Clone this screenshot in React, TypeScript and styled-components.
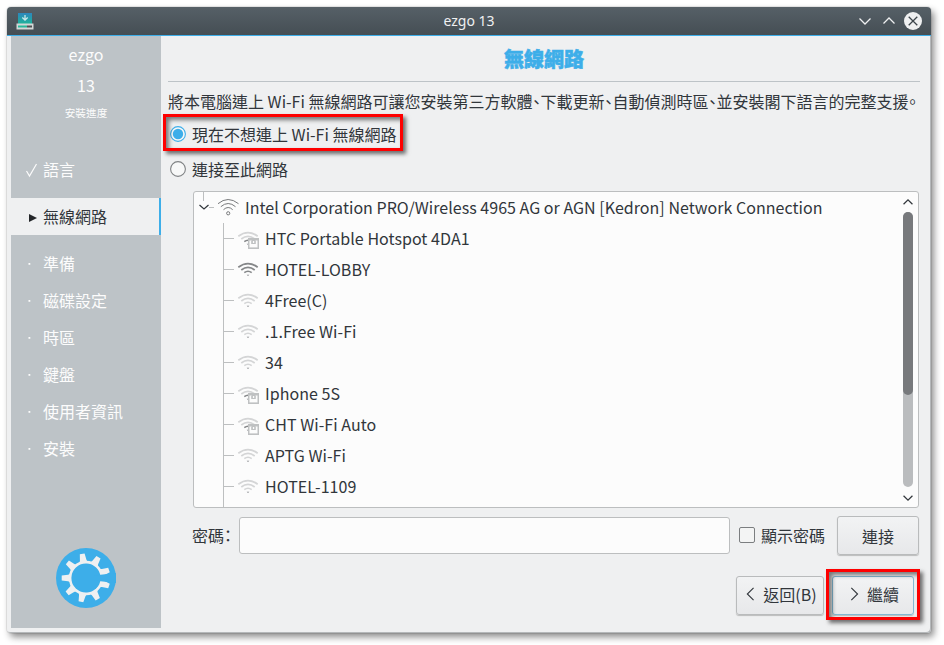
import React from "react";
import styled, { createGlobalStyle } from "styled-components";

const blue = "#3daee9";

const GlobalStyle = createGlobalStyle`
  * { box-sizing: border-box; }
  body {
    margin: 0;
    background: #fff;
    overflow: hidden;
    font-family: "Noto Sans CJK TC", "Noto Sans", sans-serif;
    font-size: 16px;
    color: #31363b;
  }
  button, input { font: inherit; color: inherit; }
`;

const Desktop = styled.div`
  height: 645px;
  padding: 7px 13px 12px 7px;
`;

const Window = styled.div`
  position: relative;
  height: 626px;
  display: flex;
  flex-direction: column;
  border-radius: 4px;
  background: #eff0f1;
  box-shadow: 0 0 0 1px rgba(0, 0, 0, 0.07), inset -1px -1px 0 #b5b8ba, 3px 4px 7px rgba(0, 0, 0, 0.45);
`;

const TitleBar = styled.header`
  display: grid;
  grid-template-columns: 80px 1fr 80px;
  align-items: center;
  height: 29px;
  flex: none;
  padding: 0 9px;
  border-bottom: 1px solid ${blue};
  border-radius: 4px 4px 0 0;
  background: linear-gradient(#566067, #454e54);
`;

const WindowTitle = styled.div`
  font-family: "Noto Sans", sans-serif;
  font-size: 14px;
  line-height: 27px;
  height: 28px;
  text-align: center;
  color: #eff0f1;
`;

const WindowButtons = styled.div`
  display: flex;
  justify-content: flex-end;
  align-items: center;
  gap: 6px;
  svg { display: block; }
`;

const Content = styled.div`
  display: flex;
  flex: 1;
  min-height: 0;
  padding: 0 11px 5px 4px;
`;

const Sidebar = styled.aside`
  width: 150px;
  flex: none;
  display: flex;
  flex-direction: column;
  padding-top: 3px;
  background: #bdc3c7;
  color: #fcfcfc;
`;

const SideHead = styled.div`
  height: 31px;
  line-height: 31px;
  text-align: center;
`;

const SideCaption = styled.div`
  height: 22px;
  line-height: 24px;
  font-size: 10.67px;
  text-align: center;
`;

const Steps = styled.nav`
  padding-top: 28px;
`;

const Step = styled.div<{ $active?: boolean }>`
  display: flex;
  height: 37px;
  line-height: 37px;
  margin: ${(p) => (p.$active ? "10px 0" : "0")};
  background: ${(p) => (p.$active ? "#eff0f1" : "transparent")};
  color: ${(p) => (p.$active ? "#31363b" : "#fcfcfc")};
  border-right: ${(p) => (p.$active ? `2px solid ${blue}` : "0")};
`;

const Marker = styled.span`
  display: flex;
  align-items: center;
  width: 32px;
  padding-left: 14px;
`;

const Emblem = styled.div`
  margin: auto auto 20px;
  height: 60px;
  svg { display: block; }
`;

const Page = styled.main`
  flex: 1;
  min-width: 0;
  display: flex;
  flex-direction: column;
  padding-left: 7px;
`;

const Heading = styled.h1`
  margin: 0;
  height: 46px;
  flex: none;
  border-bottom: 1px solid #bdc3c7;
  line-height: 46px;
  font-size: 20px;
  font-weight: 900;
  text-align: center;
  color: ${blue};
  -webkit-text-stroke: 0.5px ${blue};
`;

const Intro = styled.p`
  margin: 6px 0 0;
  height: 27px;
  line-height: 27px;
  white-space: nowrap;
`;

const Half = styled.span`
  font-feature-settings: "halt";
`;

const Radio = styled.label<{ $top: number }>`
  display: flex;
  align-items: center;
  gap: 6px;
  height: 24px;
  margin-top: ${(p) => p.$top}px;
  padding-left: 2px;
  line-height: 24px;
  svg { display: block; flex: none; }
`;

const Tree = styled.div`
  display: flex;
  height: 317px;
  flex: none;
  margin: 10px 0 0 25px;
  width: 726px;
  border: 1px solid #bcbebf;
  border-radius: 3px;
  background: #fcfcfc;
  overflow: hidden;
`;

const Rows = styled.div`
  flex: 1;
  height: 315px;
`;

const AdapterRow = styled.div`
  display: flex;
  height: 31px;
  line-height: 31px;
  white-space: nowrap;
  letter-spacing: 0.03px;
  svg { display: block; flex: none; margin-right: -1px; }
`;

const Networks = styled.div`
  height: 284px;
  margin-left: 29px;
  border-left: 1px solid #bdbfc0;
`;

const Network = styled.div`
  display: flex;
  height: 31px;
  line-height: 31px;
  letter-spacing: 0.05px;
  &::before {
    content: "";
    width: 10px;
    height: 1px;
    margin-top: 15px;
    background: #bdbfc0;
  }
  svg { display: block; flex: none; margin-right: 5px; }
`;

const ScrollBar = styled.div`
  width: 21px;
  display: flex;
  flex-direction: column;
  align-items: center;
  padding-top: 5px;
  svg { display: block; }
`;

const Track = styled.div`
  width: 10px;
  height: 275px;
  margin: 5px 0 6px;
  border-radius: 5px;
  background: #babcbe;
`;

const Thumb = styled.div`
  height: 183px;
  border-radius: 5px;
  background: #77797c;
`;

const PasswordRow = styled.div`
  display: flex;
  align-items: center;
  height: 40px;
  margin: 8px 0 0 24px;
  flex: none;
`;

const PasswordInput = styled.input`
  width: 491px;
  height: 37px;
  margin: 0 9px 2px 0;
  border: 1px solid #bcbebf;
  border-radius: 3px;
  background: #fcfcfc;
`;

const PasswordLabel = styled.label`
  width: 47px;
  padding-bottom: 2px;
  white-space: nowrap;
`;

const ShowPassword = styled.label`
  display: flex;
  align-items: center;
  width: 98px;
  gap: 6px;
  padding-bottom: 2px;
  white-space: nowrap;
`;

const CheckBox = styled.span`
  width: 16px;
  height: 16px;
  border: 1px solid #7b7e80;
  border-radius: 2px;
  background: #f3f4f4;
  margin-bottom: 1px;
`;

const Button = styled.button<{ $width: number; $focused?: boolean }>`
  display: flex;
  align-items: center;
  justify-content: center;
  gap: 5px;
  width: ${(p) => p.$width}px;
  height: 39px;
  padding: 0;
  border: 1px solid ${(p) => (p.$focused ? "#83b8d2" : "#b9bbbc")};
  border-radius: 3px;
  background: linear-gradient(#f2f3f4, #e7e8ea);
  box-shadow: 0 1px 1px rgba(0, 0, 0, 0.22);
  white-space: nowrap;
  svg { display: block; flex: none; }
`;

const ConnectButton = styled(Button)`
  align-self: flex-start;
`;

const NavButton = styled(Button)`
  padding: 0 1px 3px 0;
`;

const Footer = styled.footer`
  display: flex;
  justify-content: flex-end;
  gap: 8px;
  margin-top: 20px;
  padding-right: 6px;
`;

const Highlight = styled.div<{ $x: number; $y: number; $w: number; $h: number }>`
  position: absolute;
  left: ${(p) => p.$x}px;
  top: ${(p) => p.$y}px;
  width: ${(p) => p.$w}px;
  height: ${(p) => p.$h}px;
  border: 3px solid #fe0000;
  box-shadow: 3px 3px 4px rgba(0, 0, 0, 0.55), inset 3px 3px 4px rgba(0, 0, 0, 0.5);
  pointer-events: none;
`;

const Chevron = ({ d, w = 18, color = "#31363b", weight = 1.25 }: { d: string; w?: number; color?: string; weight?: number }) => (
  <svg width={w} height={w} viewBox="0 0 18 18" fill="none" stroke={color} strokeWidth={weight}>
    <path d={d} />
  </svg>
);

const RadioMark = ({ checked }: { checked?: boolean }) => (
  <svg width="16" height="16" viewBox="0 0 16 16">
    <circle cx="8" cy="8" r="7.4" fill="#f7f8f8" stroke={checked ? blue : "#7f8284"} strokeWidth="1.1" />
    {checked && <circle cx="8" cy="8" r="5.2" fill={blue} />}
  </svg>
);

const AdapterIcon = () => (
  <svg width="52" height="31" viewBox="0 0 52 31" fill="none">
    <path d="M9.500 0V9M15 15.500H20" stroke="#bdbfc0" />
    <path d="M5.500 13L10 17L14.500 13" stroke="#31363b" strokeWidth="1.2" />
    <g stroke="#77797b" strokeWidth="1">
      <path d="M24 11.700Q34 3.300 44.500 11.700M26.800 14.700Q34.200 8.300 41.500 14.700M29.500 17.700Q34.200 13.300 38.700 17.700" />
      <circle cx="34.200" cy="21.300" r="1.600" />
    </g>
  </svg>
);

const SignalIcon = ({ strong, locked }: { strong?: boolean; locked?: boolean }) => (
  <svg width="26" height="31" viewBox="0 0 26 31" fill="none">
    <g stroke={strong ? "#858789" : "#d4d5d6"} strokeWidth="1.700">
      <path d="M4.300 13.200Q14 5.900 23.700 13.200" />
      <path d="M7.300 16Q14 10.800 20.700 16" />
      <path d="M10.300 18.700Q14 15.800 17.700 18.700" stroke={locked ? "#858789" : undefined} />
    </g>
    <path d="M12.700 20.700H15.300L14 22Z" fill="#85878a" />
    {locked && (
      <g>
        <path d="M14 15H25V26H14Z" fill="#bfc1c2" />
        <path d="M15 17.500H24V25H15Z" fill="#fcfcfc" />
        <path d="M15 16H24V24.900H15Z" stroke="#bfc1c2" strokeWidth="1" />
        <path d="M17.200 21V18.500Q17.200 16 19.500 16T21.800 18.500V21Z" fill="#bfc1c2" />
        <path d="M18.900 18H20.200V20H18.900Z" fill="#fcfcfc" />
      </g>
    )}
  </svg>
);

const gearAngles = [-99, -59, -19, 19, 61, 102, 141, 180, 220];

const Gear = () => (
  <svg width="60" height="60" viewBox="0 0 60 60">
    <circle cx="30" cy="30" r="30" fill={blue} />
    <circle cx="30" cy="30" r="15.700" fill="none" stroke="#eff0f1" strokeWidth="3" />
    {gearAngles.map((a) => (
      <path key={a} d="M14 -4.700L18 -3.300L24.300 -2.400V2.400L18 3.300L14 4.700Z" fill="#eff0f1" transform={`translate(30 30) rotate(${a})`} />
    ))}
    <circle cx="30" cy="30" r="14.600" fill={blue} />
    <path d="M38 27.500L60 25V35L38 32.500Z" fill={blue} />
  </svg>
);

const AppIcon = () => (
  <svg width="18" height="18" viewBox="0 0 18 18">
    <defs>
      <linearGradient id="installer" x2="0" y2="1">
        <stop stopColor="#2d87bd" />
        <stop offset="1" stopColor="#1eb39a" />
      </linearGradient>
    </defs>
    <path d="M2 1H16V12H2Z" fill="url(#installer)" />
    <path d="M9 3V8M6.300 5.500L9 8L11.700 5.500" fill="none" stroke="#c9e6e9" strokeWidth="1.300" />
    <path d="M.5 11.500H17.500V17.500H.5Z" fill="#d3d7d7" />
    <path d="M2 14.500H11" stroke="#26b99a" strokeWidth="2" />
    <path d="M11 14.500H16" stroke="#4d5052" strokeWidth="2" />
  </svg>
);

const networks = [
  { name: "HTC Portable Hotspot 4DA1", locked: true },
  { name: "HOTEL-LOBBY", strong: true },
  { name: "4Free(C)" },
  { name: ".1.Free Wi-Fi" },
  { name: "34" },
  { name: "Iphone 5S", locked: true },
  { name: "CHT Wi-Fi Auto", locked: true },
  { name: "APTG Wi-Fi" },
  { name: "HOTEL-1109" },
];

const steps = ["語言", "無線網路", "準備", "磁碟設定", "時區", "鍵盤", "使用者資訊", "安裝"];

const StepMark = ({ index }: { index: number }) => (
  <svg width="14" height="16" viewBox="0 0 14 16">
    {index === 0 && <path d="M1.500 9L4.500 14L11.500 2" fill="none" stroke="#fcfcfc" strokeWidth="1.200" />}
    {index === 1 && <path d="M4 5L12 9L4 13Z" fill="#232629" />}
    {index > 1 && <path d="M3.500 7H5.300V8.800H3.500Z" fill="#fcfcfc" />}
  </svg>
);

export default function App() {
  return (
    <Desktop lang="zh-Hant">
      <GlobalStyle />
      <Window>
        <TitleBar>
          <AppIcon />
          <WindowTitle>ezgo 13</WindowTitle>
          <WindowButtons>
            <Chevron color="#eff0f1" d="M3.500 6.500L9 12L14.500 6.500" />
            <Chevron color="#eff0f1" d="M3.500 11.500L9 6L14.500 11.500" />
            <svg width="18" height="18" viewBox="0 0 18 18">
              <circle cx="9" cy="9" r="9" fill="#eff0f1" />
              <path d="M4.700 4.700L13.300 13.300M13.300 4.700L4.700 13.300" stroke="#3d454b" strokeWidth="1.300" />
            </svg>
          </WindowButtons>
        </TitleBar>
        <Content>
          <Sidebar>
            <SideHead>ezgo</SideHead>
            <SideHead>13</SideHead>
            <SideCaption>安裝進度</SideCaption>
            <Steps>
              {steps.map((step, i) => (
                <Step key={step} $active={i === 1}>
                  <Marker><StepMark index={i} /></Marker>
                  {step}
                </Step>
              ))}
            </Steps>
            <Emblem><Gear /></Emblem>
          </Sidebar>
          <Page>
            <Heading>無線網路</Heading>
            <Intro>
              將本電腦連上 Wi-Fi 無線網路可讓您安裝第三方軟體<Half>、</Half>下載更新<Half>、</Half>自動偵測時區<Half>、</Half>並安裝閣下語言的完整支援<Half>。</Half>
            </Intro>
            <Radio $top={7}><RadioMark checked />現在不想連上 Wi-Fi 無線網路</Radio>
            <Radio $top={11}><RadioMark />連接至此網路</Radio>
            <Tree>
              <Rows>
                <AdapterRow><AdapterIcon />Intel Corporation PRO/Wireless 4965 AG or AGN [Kedron] Network Connection</AdapterRow>
                <Networks>
                  {networks.map((n) => (
                    <Network key={n.name}><SignalIcon strong={n.strong} locked={n.locked} />{n.name}</Network>
                  ))}
                </Networks>
              </Rows>
              <ScrollBar>
                <Chevron w={10} weight={2.2} d="M1 13L9 5L17 13" />
                <Track><Thumb /></Track>
                <Chevron w={10} weight={2.2} d="M1 5L9 13L17 5" />
              </ScrollBar>
            </Tree>
            <PasswordRow>
              <PasswordLabel>密碼<Half>：</Half></PasswordLabel>
              <PasswordInput type="password" />
              <ShowPassword><CheckBox />顯示密碼</ShowPassword>
              <ConnectButton $width={82}>連接</ConnectButton>
            </PasswordRow>
            <Footer>
              <NavButton $width={88}><Chevron w={16} d="M13 2L6 9L13 16" />返回(B)</NavButton>
              <NavButton $width={82} $focused><Chevron w={16} d="M6 2L13 9L6 16" />繼續</NavButton>
            </Footer>
          </Page>
        </Content>
        <Highlight $x={156} $y={107} $w={240} $h={37} />
        <Highlight $x={819} $y={562} $w={94} $h={51} />
      </Window>
    </Desktop>
  );
}
